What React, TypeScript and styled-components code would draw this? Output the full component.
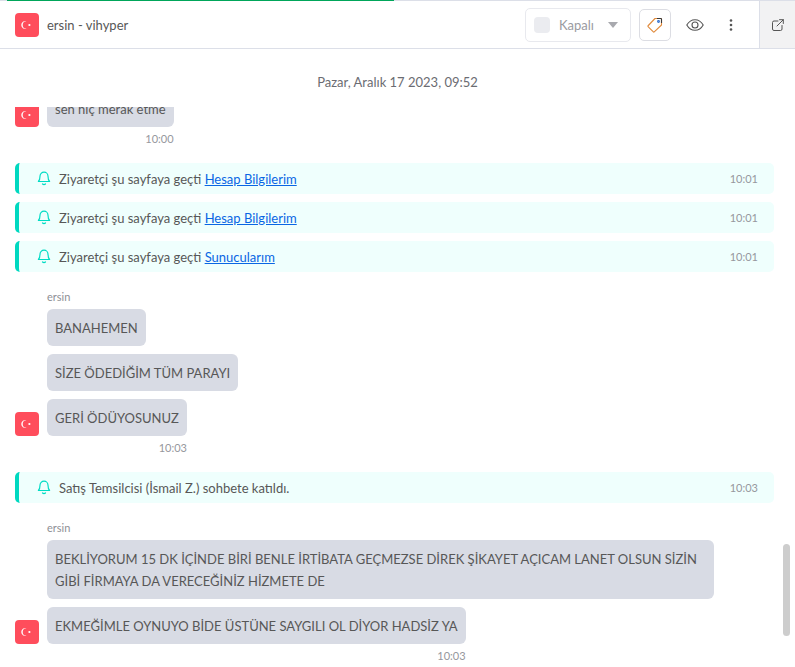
import React from 'react';
import styled, {createGlobalStyle} from 'styled-components';

const GlobalStyle = createGlobalStyle`
    html, body {
        margin: 0;
        padding: 0;
        background: #fff;
        font-family: Lato, "Noto Sans", sans-serif;
        color: #575757;
    }
`

const Page = styled.div`
    position: relative;
    width: 795px;
    height: 667px;
    overflow: hidden;
    background: #fff;
`

const Progress = styled.div`
    height: 1px;
    background: #dcdfe8;
    padding-left: 7px;
`

const ProgressFill = styled.div`
    width: 387px;
    height: 1px;
    background: #00a65a;
`

const Header = styled.header`
    display: flex;
    align-items: center;
    height: 47px;
    border-bottom: 1px solid #dcdfe8;
    padding-left: 15px;
`

const Title = styled.div`
    flex: 1;
    margin-left: 8px;
    font-size: 13px;
    color: #575757;
`

const StatusSelect = styled.div`
    display: flex;
    align-items: center;
    box-sizing: border-box;
    width: 106px;
    height: 34px;
    border: 1px solid #e8e9ee;
    border-radius: 5px;
    padding-left: 8px;
    margin-top: 1px;
    font-size: 13px;
    color: #9a9ba1;
`

const StatusBox = styled.span`
    width: 16px;
    height: 16px;
    border-radius: 4px;
    background: #ebecf0;
    margin-right: 9px;
`

const Caret = styled.span`
    width: 0;
    height: 0;
    margin-left: 14px;
    border-left: 5px solid transparent;
    border-right: 5px solid transparent;
    border-top: 6px solid #a8a9ae;
`

const IconButton = styled.div`
    display: flex;
    align-items: center;
    justify-content: center;
    box-sizing: border-box;
    width: 32px;
    height: 32px;
    margin-left: 8px;
    margin-top: 1px;
    border: 1px solid #dcdde3;
    border-radius: 5px;
`

const PlainIcon = styled.div<{$w: number}>`
    display: flex;
    align-items: center;
    justify-content: center;
    width: ${p => p.$w}px;
    height: 32px;
`

const Popout = styled.div`
    display: flex;
    align-items: center;
    justify-content: center;
    box-sizing: border-box;
    width: 36px;
    height: 47px;
    background: #f2f2f3;
    border-left: 1px solid #dcdfe8;
`

const DateBar = styled.div`
    position: absolute;
    top: 49px;
    left: 0;
    right: 0;
    height: 58px;
    background: #fff;
    text-align: center;
    line-height: 66px;
    font-size: 13px;
    color: #6b6c72;
`

const Feed = styled.main`
    padding: 41px 21px 0 15px;
`

const Group = styled.section`
    margin-bottom: 17px;
`

const Sender = styled.div`
    margin: 0 0 5px 32px;
    font-size: 11px;
    line-height: 14px;
    color: #8e8f95;
`

const Row = styled.div`
    display: flex;
    align-items: flex-end;
    gap: 8px;
    margin-bottom: 8px;
`

const LastRow = styled(Row)`
    width: fit-content;
    margin-bottom: 0;
`

const AvatarSlot = styled.div`
    flex: none;
    width: 24px;
    height: 24px;
`

const Bubble = styled.div`
    width: fit-content;
    max-width: 651px;
    padding: 7.5px 8px;
    border-radius: 6px;
    background: #d8dbe4;
    font-size: 13px;
    line-height: 22px;
    color: #575757;
`

const LastBlock = styled.div`
    width: fit-content;
`

const Time = styled.div`
    margin-top: 5px;
    text-align: right;
    font-size: 11px;
    line-height: 14px;
    color: #96979d;
`

const Notice = styled.div<{$last?: boolean}>`
    display: flex;
    align-items: center;
    box-sizing: border-box;
    height: 31px;
    margin-bottom: ${p => p.$last ? 18 : 8}px;
    padding: 0 16px 0 18px;
    border-left: 4px solid #00d8c0;
    border-radius: 5px;
    background: #effffd;
    font-size: 13px;
    color: #575757;
`

const NoticeText = styled.span`
    flex: 1;
    margin-left: 8px;
`

const NoticeLink = styled.a`
    color: #0a66e4;
    text-decoration: underline;
`

const NoticeTime = styled.span`
    font-size: 11px;
    color: #96979d;
`

const Scrollbar = styled.div`
    position: absolute;
    right: 5px;
    top: 544px;
    width: 7px;
    height: 92px;
    border-radius: 4px;
    background: #cdcdcd;
`

const Flag = () => (
    <svg width="24" height="24" viewBox="0 0 24 24">
        <rect width="24" height="24" rx="4" fill="#ff4d5c"/>
        <path d="M11.5 8.2a4 4 0 1 0 0 7.6a3.3 3.3 0 1 1 0-7.6z" fill="#fff"/>
        <circle cx="14.4" cy="12" r="1.1" fill="#fff"/>
    </svg>
)

const Bell = () => (
    <svg width="14" height="16" viewBox="0 0 14 16" fill="none" stroke="#00dcc4" strokeWidth="1.2" strokeLinecap="round" strokeLinejoin="round">
        <path d="M3 5.200a4 4 0 0 1 8 0c0 3 .6 4.200 1.600 5.300H1.400C2.400 9.400 3 8.200 3 5.200z"/>
        <path d="M5.500 13c.8.700 2.200.700 3 0"/>
    </svg>
)

const TagIcon = () => (
    <svg width="16" height="16" viewBox="0 0 16 16" fill="none" strokeWidth="1.100" strokeLinejoin="round">
        <path d="M8 1.500h5.700a.8.800 0 0 1 .8.800V8L7.500 14.700a1 1 0 0 1-1.400 0L1.300 9.900a1 1 0 0 1 0-1.400z" stroke="#e08a3c"/>
        <path d="M10 1.500h3.700a.8.800 0 0 1 .8.800V6" stroke="#3a3a3a"/>
        <circle cx="11.500" cy="4.500" r=".9" stroke="#2f6fd0"/>
    </svg>
)

const EyeIcon = () => (
    <svg width="18" height="14" viewBox="0 0 18 14" fill="none" stroke="#555" strokeWidth="1.100">
        <path d="M.8 7C2.800 3.500 5.700 1.700 9 1.700S15.200 3.500 17.200 7C15.200 10.500 12.300 12.300 9 12.300S2.800 10.500.8 7z"/>
        <circle cx="9" cy="7" r="3"/>
    </svg>
)

const DotsIcon = () => (
    <svg width="4" height="12" viewBox="0 0 4 12" fill="#555">
        <circle cx="2" cy="1.500" r="1.300"/>
        <circle cx="2" cy="6" r="1.300"/>
        <circle cx="2" cy="10.500" r="1.300"/>
    </svg>
)

const PopoutIcon = () => (
    <svg width="12" height="12" viewBox="0 0 12 12" fill="none" stroke="#555" strokeWidth="1" strokeLinecap="round" strokeLinejoin="round">
        <path d="M6 2H2a1.500 1.500 0 0 0-1.500 1.500V10A1.500 1.500 0 0 0 2 11.500h6.500A1.500 1.500 0 0 0 10 10V6.500"/>
        <path d="M5 7l6.300-6.300M7.500.7h3.800v3.800"/>
    </svg>
)

type NoticeItem = {
    text: string;
    link?: string;
    time: string;
    last?: boolean;
}

const NoticeRow = ({text, link, time, last}: NoticeItem) => (
    <Notice $last={last}>
        <Bell/>
        <NoticeText>{text} {link && <NoticeLink href="#">{link}</NoticeLink>}</NoticeText>
        <NoticeTime>{time}</NoticeTime>
    </Notice>
)

type GroupProps = {
    sender?: string;
    messages: string[];
    time: string;
}

const MessageGroup = ({sender, messages, time}: GroupProps) => {
    const earlier = messages.slice(0, -1);
    const lastMessage = messages[messages.length - 1];
    return (
        <Group>
            {sender && <Sender>{sender}</Sender>}
            {earlier.map((m, i) => (
                <Row key={i}>
                    <AvatarSlot/>
                    <Bubble>{m}</Bubble>
                </Row>
            ))}
            <LastBlock>
                <LastRow>
                    <AvatarSlot><Flag/></AvatarSlot>
                    <Bubble>{lastMessage}</Bubble>
                </LastRow>
                <Time>{time}</Time>
            </LastBlock>
        </Group>
    );
}

export default function App() {
    return (
        <Page>
            <GlobalStyle/>
            <Progress><ProgressFill/></Progress>
            <Header>
                <Flag/>
                <Title>ersin - vihyper</Title>
                <StatusSelect>
                    <StatusBox/>
                    Kapalı
                    <Caret/>
                </StatusSelect>
                <IconButton><TagIcon/></IconButton>
                <PlainIcon $w={48}><EyeIcon/></PlainIcon>
                <PlainIcon $w={24}><DotsIcon/></PlainIcon>
                <PlainIcon $w={16}/>
                <Popout><PopoutIcon/></Popout>
            </Header>
            <Feed>
                <MessageGroup messages={["sen hiç merak etme"]} time="10:00"/>
                <NoticeRow text="Ziyaretçi şu sayfaya geçti" link="Hesap Bilgilerim" time="10:01"/>
                <NoticeRow text="Ziyaretçi şu sayfaya geçti" link="Hesap Bilgilerim" time="10:01"/>
                <NoticeRow text="Ziyaretçi şu sayfaya geçti" link="Sunucularım" time="10:01" last/>
                <MessageGroup
                    sender="ersin"
                    messages={["BANAHEMEN", "SİZE ÖDEDİĞİM TÜM PARAYI", "GERİ ÖDÜYOSUNUZ"]}
                    time="10:03"
                />
                <NoticeRow text="Satış Temsilcisi (İsmail Z.) sohbete katıldı." time="10:03" last/>
                <MessageGroup
                    sender="ersin"
                    messages={[
                        "BEKLİYORUM 15 DK İÇİNDE BİRİ BENLE İRTİBATA GEÇMEZSE DİREK ŞİKAYET AÇICAM LANET OLSUN SİZİN GİBİ FİRMAYA DA VERECEĞİNİZ HİZMETE DE",
                        "EKMEĞİMLE OYNUYO BİDE ÜSTÜNE SAYGILI OL DİYOR HADSİZ YA",
                    ]}
                    time="10:03"
                />
            </Feed>
            <DateBar>Pazar, Aralık 17 2023, 09:52</DateBar>
            <Scrollbar/>
        </Page>
    );
}
